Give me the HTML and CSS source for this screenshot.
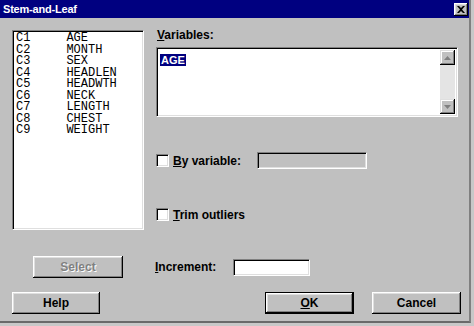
FILE: index.html
```html
<!DOCTYPE html>
<html>
<head>
<meta charset="utf-8">
<link rel="stylesheet" href="styles.css">
</head>
<body>
<div class="window">
  <div class="titlebar">
    <span class="title">Stem-and-Leaf</span>
    <span class="close"><svg width="8" height="7" viewBox="0 0 8 7"><path d="M0 0h2l2 2 2-2h2L5 3.5 8 7H6L4 5 2 7H0l3-3.5z" fill="#000"/></svg></span>
  </div>
  <div class="body">
    <div class="main">
      <div class="list field">C1     AGE
C2     MONTH
C3     SEX
C4     HEADLEN
C5     HEADWTH
C6     NECK
C7     LENGTH
C8     CHEST
C9     WEIGHT</div>
      <div class="right">
        <div class="label lbl-vars"><u>V</u>ariables:</div>
        <div class="varbox field">
          <div class="vartext"><span class="sel">AGE</span></div>
          <div class="scroll">
            <div class="sbtn"><svg width="7" height="4" viewBox="0 0 7 4"><path d="M3.5 0L7 4H0z" fill="#808080"/></svg></div>
            <div class="track"></div>
            <div class="sbtn"><svg width="7" height="4" viewBox="0 0 7 4"><path d="M0 0h7L3.5 4z" fill="#808080"/></svg></div>
          </div>
        </div>
        <div class="check-row by">
          <span class="check"></span>
          <span class="label by-label"><u>B</u>y variable:</span>
          <span class="field byfield"></span>
        </div>
        <div class="check-row trim">
          <span class="check"></span>
          <span class="label trim-label"><u>T</u>rim outliers</span>
        </div>
      </div>
    </div>
    <div class="row2">
      <div class="btn select">Select</div>
      <span class="label inc-label"><u>I</u>ncrement:</span>
      <span class="field incfield"></span>
    </div>
    <div class="row3">
      <div class="btn help">Help</div>
      <div class="btn ok default"><u>O</u>K</div>
      <div class="btn cancel">Cancel</div>
    </div>
  </div>
</div>
</body>
</html>
```
FILE: styles.css
```css
html, body {
  margin: 0;
  padding: 0;
}
body {
  background: #c8c8c8;
  width: 474px;
  height: 326px;
  overflow: hidden;
  font-family: "Liberation Sans", Arial, sans-serif;
}
.window {
  width: 469px;
  height: 321px;
  background: #c0c0c0;
  border-right: 2px solid #808080;
  border-bottom: 2px solid #6a6a6a;
  box-sizing: content-box;
  display: flex;
  flex-direction: column;
}
.titlebar {
  height: 18px;
  background: #000080;
  display: flex;
  align-items: center;
  justify-content: space-between;
  padding: 0 1px 0 3px;
}
.title {
  color: #fff;
  font-weight: bold;
  font-size: 11px;
  letter-spacing: -0.2px;
}
.close {
  width: 14px;
  height: 13px;
  box-sizing: border-box;
  background: #c0c0c0;
  box-shadow: inset -1px -1px #000, inset 1px 1px #fff, inset -2px -2px #808080, inset 2px 2px #dfdfdf;
  display: flex;
  align-items: center;
  justify-content: center;
}
.body {
  padding-left: 12px;
  display: flex;
  flex-direction: column;
}
.main {
  display: flex;
  margin-top: 12px;
}
.field {
  box-sizing: border-box;
  border: 1px solid;
  border-color: #808080 #fff #fff #808080;
  box-shadow: inset 1px 1px #000, inset -1px -1px #dfdfdf;
  background: #fff;
}
.list {
  width: 132px;
  height: 200px;
  padding: 2px 3px;
  white-space: pre;
  font-family: "Liberation Mono", "Courier New", monospace;
  font-size: 12px;
  line-height: 11.5px;
  color: #000;
}
.right {
  margin-left: 12px;
  display: flex;
  flex-direction: column;
}
.label {
  font-size: 12px;
  font-weight: bold;
  color: #000;
  line-height: 14px;
}
.label u {
  text-decoration-thickness: 1px;
  text-underline-offset: 1px;
}
.lbl-vars {
  margin-top: -2px;
  margin-bottom: 5px;
  padding-left: 1px;
}
.varbox {
  width: 302px;
  height: 70px;
  display: flex;
  padding: 2px;
}
.vartext {
  flex: 1;
  padding-left: 1px;
}
.sel {
  display: inline-block;
  background: #000080;
  color: #fff;
  font-size: 11px;
  font-weight: bold;
  line-height: 12px;
  padding: 0 1px;
}
.scroll {
  width: 15px;
  display: flex;
  flex-direction: column;
}
.track {
  flex: 1;
  background: #e4e4e4;
}
.sbtn {
  height: 15px;
  background: #c0c0c0;
  box-shadow: inset -1px -1px #000, inset 1px 1px #dfdfdf, inset -2px -2px #808080, inset 2px 2px #fff;
  display: flex;
  align-items: center;
  justify-content: center;
}
.check-row {
  display: flex;
  align-items: center;
}
.check {
  width: 13px;
  height: 13px;
  box-sizing: border-box;
  border: 1px solid;
  border-color: #808080 #fff #fff #808080;
  box-shadow: inset 1px 1px #000, inset -1px -1px #dfdfdf;
  background: #fff;
}
.by {
  margin-top: 35px;
  height: 17px;
}
.by-label {
  margin-left: 4px;
  width: 84px;
}
.byfield {
  width: 110px;
  height: 17px;
  background: #c0c0c0;
}
.trim {
  margin-top: 39px;
  height: 13px;
}
.trim-label {
  margin-left: 4px;
}
.row2 {
  display: flex;
  align-items: center;
  margin-top: 26px;
  height: 22px;
}
.btn {
  box-sizing: border-box;
  height: 22px;
  background: #c0c0c0;
  box-shadow: inset -1px -1px #000, inset 1px 1px #fff, inset -2px -2px #808080, inset 2px 2px #dfdfdf;
  display: flex;
  align-items: center;
  justify-content: center;
  font-size: 12px;
  font-weight: bold;
  color: #000;
}
.btn u {
  text-underline-offset: 1px;
}
.select {
  margin-left: 21px;
  width: 90px;
  color: #808080;
  text-shadow: 1px 1px #fff;
}
.inc-label {
  margin-left: 32px;
  width: 78px;
}
.incfield {
  width: 77px;
  height: 17px;
}
.row3 {
  display: flex;
  margin-top: 14px;
}
.help {
  width: 88px;
}
.ok {
  margin-left: 165px;
  width: 89px;
}
.default {
  border: 1px solid #000;
  box-shadow: inset -1px -1px #000, inset 1px 1px #fff, inset -2px -2px #808080, inset 2px 2px #dfdfdf;
}
.cancel {
  margin-left: 18px;
  width: 89px;
}
```
